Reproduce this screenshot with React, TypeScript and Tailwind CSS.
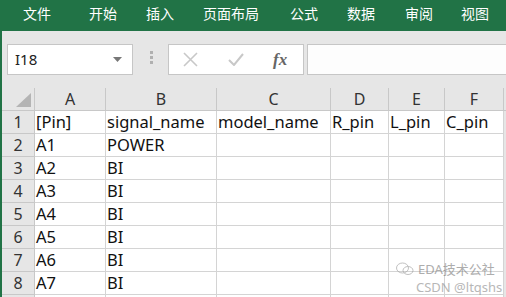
import React from 'react';

const tabs = ['文件', '开始', '插入', '页面布局', '公式', '数据', '审阅', '视图'];
const tabX = [23, 89, 146, 203, 290, 347, 405, 461];

const cols = [
  { key: 'A', w: 'w-[71px]' },
  { key: 'B', w: 'w-[111px]' },
  { key: 'C', w: 'w-[114px]' },
  { key: 'D', w: 'w-[58px]' },
  { key: 'E', w: 'w-[56px]' },
  { key: 'F', w: 'w-[59px]' },
];

const rows: string[][] = [
  ['[Pin]', 'signal_name', 'model_name', 'R_pin', 'L_pin', 'C_pin'],
  ['A1', 'POWER', '', '', '', ''],
  ['A2', 'BI', '', '', '', ''],
  ['A3', 'BI', '', '', '', ''],
  ['A4', 'BI', '', '', '', ''],
  ['A5', 'BI', '', '', '', ''],
  ['A6', 'BI', '', '', '', ''],
  ['A7', 'BI', '', '', '', ''],
  ['', '', '', '', '', ''],
];

const font = { fontFamily: '"Noto Sans", "Noto Sans CJK SC", sans-serif' };

export default function App() {
  return (
    <div className="w-[506px] h-[297px] overflow-hidden bg-[#e6e6e6] relative" style={font}>
      {/* ribbon tabs */}
      <div className="h-[31px] bg-[#217346] relative text-white text-[14px]">
        {tabs.map((t, i) => (
          <span key={t} className="absolute top-[4px] leading-[20px]" style={{ left: tabX[i] }}>
            {t}
          </span>
        ))}
      </div>

      <div className="border-l-2 border-[#217346] h-[266px] flex flex-col">
        {/* formula bar */}
        <div className="h-[57px] flex items-start pt-[13px] shrink-0">
          <div className="ml-[5px] w-[126px] h-[31px] bg-white border border-[#c6c6c6] flex items-center pl-[7px] pr-[10px]">
            <span className="text-[15px] text-[#222] flex-1">I18</span>
            <svg width="9" height="5" viewBox="0 0 9 5"><path d="M0 0h9L4.5 5z" fill="#777" /></svg>
          </div>
          <div className="ml-[17px] mt-[7px] flex flex-col gap-[2px]">
            <div className="w-[3px] h-[3px] bg-[#b0b0b0]" />
            <div className="w-[3px] h-[3px] bg-[#b0b0b0]" />
            <div className="w-[3px] h-[3px] bg-[#b0b0b0]" />
          </div>
          <div className="ml-[15px] w-[136px] h-[31px] bg-white border border-[#c6c6c6] flex items-center">
            <svg className="ml-[14px]" width="15" height="15" viewBox="0 0 15 15">
              <path d="M1 1L14 14M14 1L1 14" stroke="#c8c8c8" strokeWidth="1.6" />
            </svg>
            <svg className="ml-[30px]" width="16" height="13" viewBox="0 0 16 13">
              <path d="M1 7L6 12L15 1" stroke="#c8c8c8" strokeWidth="2" fill="none" />
            </svg>
            <span className="ml-[29px] text-[17px] italic font-bold text-[#666]" style={{ fontFamily: '"Liberation Serif", serif' }}>
              fx
            </span>
          </div>
          <div className="ml-[3px] flex-1 h-[31px] bg-[#fdfdfd] border border-[#c6c6c6] border-r-0" />
        </div>

        {/* grid */}
        <div className="flex-1 text-[16.5px] text-[#111]">
          <div className="flex h-[23px] bg-[#e6e6e6]">
            <div className="w-[33px] border-r border-b border-[#c8c8c8] relative">
              <svg className="absolute left-[14px] top-[5px]" width="15" height="14" viewBox="0 0 15 14">
                <path d="M15 0V14H0z" fill="#b4b4b4" />
              </svg>
            </div>
            {cols.map((c) => (
              <div key={c.key} className={`${c.w} border-r border-b border-[#c8c8c8] flex items-center justify-center text-[#333] text-[16px]`}>
                {c.key}
              </div>
            ))}
            <div className="flex-1 border-b border-[#c8c8c8]" />
          </div>
          {rows.map((r, ri) => (
            <div key={ri} className="flex h-[23px]">
              <div className="w-[33px] bg-[#e6e6e6] border-r border-b border-[#c8c8c8] flex items-center justify-center text-[#333] text-[16px]">
                {ri < 8 ? ri + 1 : ''}
              </div>
              {cols.map((c, ci) => (
                <div key={c.key} className={`${c.w} bg-white border-r border-b border-[#d4d4d4] flex items-center pl-[1px] whitespace-nowrap overflow-hidden leading-none`}>
                  {r[ci]}
                </div>
              ))}
              <div className="flex-1 bg-[#e6e6e6]" />
            </div>
          ))}
        </div>
      </div>

      {/* watermark */}
      <div className="absolute left-[396px] top-[262px] flex items-center gap-[4px] text-[13px] leading-[14px] text-[#777] opacity-60 pointer-events-none">
        <svg width="18" height="14" viewBox="0 0 18 14">
          <ellipse cx="6.5" cy="6" rx="6" ry="5" fill="none" stroke="#999" strokeWidth="1" />
          <ellipse cx="12" cy="8.5" rx="5" ry="4" fill="none" stroke="#999" strokeWidth="1" />
        </svg>
        <span>EDA技术公社</span>
      </div>
      <div className="absolute left-[416px] top-[280px] text-[13px] leading-[14px] text-[#888] opacity-60 pointer-events-none">
        CSDN @ltqshs
      </div>
    </div>
  );
}
